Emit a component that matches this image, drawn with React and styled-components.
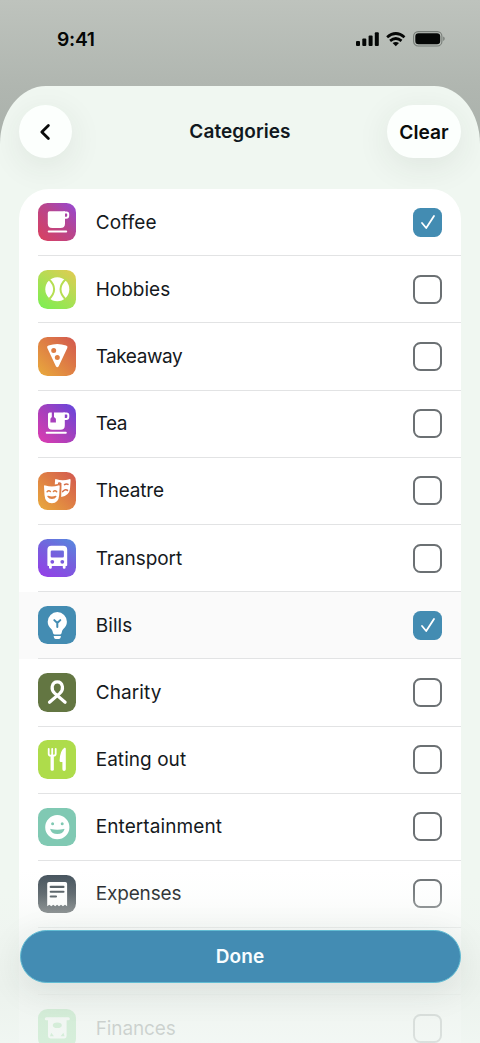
import React from "react";
import styled, { createGlobalStyle } from "styled-components";

const Global = createGlobalStyle`
  * { box-sizing: border-box; }
  body { margin: 0; font-family: Inter, "Liberation Sans", sans-serif; color: #15191d; overflow: hidden; }
  button { font: inherit; border: 0; padding: 0; cursor: pointer; }
`;

const Screen = styled.div`
  position: relative;
  display: flex;
  flex-direction: column;
  width: 480px;
  height: 1043px;
  overflow: hidden;
  background: linear-gradient(#bec3bd 0, #b0b6b0 86px, #a9b0aa 150px);
`;

const StatusBar = styled.div`
  display: flex;
  flex: none;
  align-items: center;
  justify-content: space-between;
  height: 86px;
  padding: 0 35px 8px 57px;
  color: #050706;
`;

const Time = styled.span`
  font-size: 19.3px;
  font-weight: 600;
  letter-spacing: -0.3px;
`;

const StatusIcons = styled.div`
  display: flex;
  align-items: center;
  gap: 7px;
  svg { display: block; }
`;

const Sheet = styled.main`
  display: flex;
  flex: 1;
  flex-direction: column;
  min-height: 0;
  overflow: hidden;
  background: #f0f7f1;
  border-radius: 46px 46px 0 0 / 58px 58px 0 0;
`;

const Header = styled.header`
  display: grid;
  flex: none;
  grid-template-columns: 74px 1fr 74px;
  align-items: center;
  height: 103px;
  padding: 0 19px 12px;
`;

const Title = styled.h1`
  margin: 0;
  color: #111820;
  font-size: 19px;
  font-weight: 600;
  letter-spacing: 0.08px;
  text-align: center;
`;

const PillButton = styled.button`
  display: flex;
  align-items: center;
  justify-content: center;
  width: ${(p) => p.$width}px;
  height: 52.5px;
  border-radius: 27px;
  background: #fcfffd;
  color: #0a0c0b;
  font-size: 19.2px;
  font-weight: 600;
  box-shadow: 0 8px 34px rgba(40, 50, 45, 0.09);
`;

const BackIcon = styled.svg`
  margin-right: 2px;
`;

const List = styled.ul`
  flex: none;
  margin: 0 19px 0 19.3px;
  padding: 0;
  list-style: none;
  overflow: hidden;
  background: #fff;
  border-radius: 30px 30px 0 0;
`;

const Row = styled.li`
  display: flex;
  height: 67.2px;
  padding-left: 18.7px;
  background: ${(p) => (p.$active ? "#fafafa" : "transparent")};
`;

const RowBody = styled.div`
  display: flex;
  flex: 1;
  align-items: center;
  padding-right: 19px;
  border-bottom: 1px solid #e2e3e4;
`;

const Tile = styled.span`
  display: flex;
  flex: none;
  width: 38.5px;
  height: 38.5px;
  border-radius: 9.5px;
  background: ${(p) => p.$fill};
  color: #fff;
  svg { display: block; width: 100%; height: 100%; }
`;

const Label = styled.span`
  flex: 1;
  margin-left: 19.2px;
  color: #15191d;
  font-size: 19px;
  font-weight: 400;
  letter-spacing: ${(p) => p.$tracking}px;
`;

const Checkbox = styled.span`
  display: flex;
  align-items: center;
  justify-content: center;
  width: 29px;
  height: 29px;
  border: ${(p) => (p.$checked ? "0" : "2.4px solid #6b7073")};
  border-radius: 7.5px;
  background: ${(p) => (p.$checked ? "#438cb2" : "transparent")};
`;

const Footer = styled.footer`
  position: absolute;
  right: 0;
  bottom: 0;
  left: 0;
  height: 183px;
  padding: 70px 19.5px 0;
  background: linear-gradient(
    rgba(240, 246, 241, 0) 10px,
    rgba(240, 246, 241, 0.12) 34px,
    rgba(239, 244, 240, 0.5) 67px,
    rgba(235, 241, 236, 0.83) 125px,
    rgba(240, 246, 242, 0.84) 183px
  );
`;

const DoneButton = styled.button`
  display: flex;
  align-items: center;
  justify-content: center;
  width: 100%;
  height: 52.7px;
  border: 1px solid #62bcd3;
  border-radius: 27px;
  background: #438cb3;
  color: #f8fdff;
  font-size: 19px;
  font-weight: 600;
  letter-spacing: 0.1px;
  box-shadow: 0 8px 34px rgba(40, 50, 45, 0.1);
`;

const Glyph = ({ children }) => (
  <svg viewBox="0 0 38.5 38.5" fill="none" aria-hidden="true">{children}</svg>
);

const stroke = (width) => ({
  stroke: "currentColor",
  strokeWidth: width,
  strokeLinecap: "round",
  strokeLinejoin: "round",
});

const Coffee = () => (
  <Glyph>
    <path d="M11.5 8.3H27V20.5Q27 25 22.5 25H14.3Q9.8 25 9.8 20.5V10Q9.8 8.3 11.5 8.3Z" fill="currentColor" />
    <path d="M26 9.4H28.6Q30.2 9.4 30.2 11V12.8Q30.2 14.8 28.2 14.8H26" {...stroke(2)} />
    <path d="M10.7 28.4H28.2" {...stroke(2)} />
  </Glyph>
);

const Tennis = ({ tint = "#b6de52" }) => (
  <Glyph>
    <circle cx="19.3" cy="19.3" r="12" fill="currentColor" />
    <path d="M10.7 9Q21.5 19.3 10.7 29.6M27.9 9Q17.1 19.3 27.9 29.6" stroke={tint} strokeWidth="2" />
  </Glyph>
);

const Pizza = () => (
  <Glyph>
    <path
      fillRule="evenodd"
      fill="currentColor"
      d="M9.3 11Q8.4 9.2 10.5 8.4Q19.3 5.4 28.1 8.4Q30.2 9.2 29.3 11L20.7 29.3Q19.3 31.3 17.9 29.3ZM18.2 13.5A2.5 2.5 0 1 0 13.2 13.5A2.5 2.5 0 1 0 18.2 13.5ZM21.8 20.6A2.5 2.5 0 1 0 16.8 20.6A2.5 2.5 0 1 0 21.8 20.6Z"
    />
  </Glyph>
);

const Tea = () => (
  <Glyph>
    <path
      fill="currentColor"
      d="M11.7 8.6H13.8V13L12.4 14.7V18.6H17.9V14.7L16 13V8.6H26.8V21.4Q26.8 25.8 22.4 25.8H14.4Q10 25.8 10 21.4V10.3Q10 8.6 11.7 8.6Z"
    />
    <path d="M26 9.6H28.6Q30.3 9.6 30.3 11.2V12.8Q30.3 15 28.2 15H26" {...stroke(2)} />
    <path d="M8.7 28.7H27.8" {...stroke(2)} />
  </Glyph>
);

const Masks = () => (
  <Glyph>
    <path
      fill="currentColor"
      d="M17.1 7.8Q17.2 6.8 18.4 7.2Q24.8 9.3 31.2 7.2Q32.7 6.8 32.6 8.4L32 17Q31.3 23.6 23.2 24.9L23.5 13.2Q23.5 11.4 21.7 11.8L16.8 12.4Z"
    />
    <path d="M26.5 12.6Q28.4 11.3 30 12.4M20.6 11.2Q22 10.8 22.8 11.8M24.7 19.6Q27.6 16.5 29.5 18.4" stroke="#d66f49" strokeWidth="1.5" strokeLinecap="round" />
    <path
      fill="currentColor"
      d="M6 14.3Q5.9 12.9 7.4 13.4Q13.9 15.6 20.3 13.4Q21.8 12.9 21.7 14.3L21.2 23Q20.6 31.2 13.9 31.2Q7.1 31.2 6.5 23Z"
    />
    <path d="M9.1 19.8Q10.7 18 12.4 19.5M15.4 19.5Q17.1 18 18.7 19.8M10 24.4Q13.9 25.8 17.8 24.4Q16.6 26.4 13.9 26.4Q11.2 26.4 10 24.4Z" stroke="#de8044" strokeWidth="1.4" strokeLinecap="round" strokeLinejoin="round" />
  </Glyph>
);

const Bus = () => (
  <Glyph>
    <path
      fillRule="evenodd"
      fill="currentColor"
      d="M13.4 6.8H25.2Q29.2 6.8 29.2 10.8V26.2Q29.2 27 28.4 27H27.6V28.5Q27.6 29.8 26.2 29.8Q24.8 29.8 24.8 28.5V27H13.8V28.5Q13.8 29.8 12.4 29.8Q11 29.8 11 28.5V27H10.2Q9.4 27 9.4 26.2V10.8Q9.4 6.8 13.4 6.8ZM14 11.5Q12.7 11.5 12.7 12.8V17.3Q12.7 18.6 14 18.6H24.6Q25.9 18.6 25.9 17.3V12.8Q25.9 11.5 24.6 11.5ZM16.2 22.8A1.9 1.9 0 1 0 12.4 22.8A1.9 1.9 0 1 0 16.2 22.8ZM26.2 22.8A1.9 1.9 0 1 0 22.4 22.8A1.9 1.9 0 1 0 26.2 22.8Z"
    />
  </Glyph>
);

const Bulb = () => (
  <Glyph>
    <path
      fill="currentColor"
      d="M19.3 6.1A9.6 9.6 0 0 1 28.9 15.7Q28.9 20 25.1 23.2Q24 24.2 23.6 27Q23.4 28.4 22.1 28.4H16.5Q15.2 28.4 15 27Q14.6 24.2 13.5 23.2Q9.7 20 9.7 15.7A9.6 9.6 0 0 1 19.3 6.1ZM15.7 30H22.9Q22.7 33 20.8 33H17.8Q15.9 33 15.7 30Z"
    />
    <path d="M16.3 14.1L19.3 17L22.3 14.1M19.3 17V21" stroke="#438cb2" strokeWidth="2" strokeLinecap="round" strokeLinejoin="round" />
  </Glyph>
);

const Ribbon = () => (
  <Glyph>
    <path
      d="M11.5 29.3L21.8 20.4Q25 17.5 24.4 13.5Q23.4 8.8 19.3 8.8Q15.2 8.8 14.2 13.5Q13.6 17.5 16.8 20.4L27.1 29.3"
      {...stroke(3.2)}
    />
  </Glyph>
);

const Cutlery = () => (
  <Glyph>
    <path
      d="M10.7 8.8V13.7Q10.7 15.6 12.5 15.6H15.8Q17.7 15.6 17.7 13.7V8.8M14.2 8.8V15"
      {...stroke(1.8)}
    />
    <path d="M14.2 16V29.2" {...stroke(3.3)} />
    <path fill="currentColor" d="M26.3 7.8Q27.8 7.3 27.8 8.8V29.2Q27.8 31 26.1 31Q24.4 31 24.4 29.2V22H22.8Q21.5 22 21.6 20.5Q22 10.7 26.3 7.8Z" />
  </Glyph>
);

const Smile = () => (
  <Glyph>
    <path
      fillRule="evenodd"
      fill="currentColor"
      d="M31.4 19.2A12.1 12.1 0 1 0 7.2 19.2A12.1 12.1 0 1 0 31.4 19.2ZM16.1 15.8A1.5 1.5 0 1 0 13.1 15.8A1.5 1.5 0 1 0 16.1 15.8ZM25.7 15.8A1.5 1.5 0 1 0 22.7 15.8A1.5 1.5 0 1 0 25.7 15.8ZM13 20.9Q19.3 22.5 25.7 20.9Q26.6 20.7 26.4 21.6Q24.9 26.1 19.3 26.1Q13.8 26.1 12.3 21.6Q12.1 20.7 13 20.9Z"
    />
  </Glyph>
);

const Receipt = () => (
  <Glyph>
    <path
      fill="currentColor"
      d="M11 6.9H27.3Q29.1 6.9 29.1 8.7V31.2L27 29.8L24.9 31.2L23 29.8L21 31.2L19.1 29.8L17.2 31.2L15.2 29.8L13.3 31.2L11.3 29.8L9.2 31.2V8.7Q9.2 6.9 11 6.9Z"
    />
    <path d="M12.7 11.9H25.5M12.7 16.8H25.5M12.7 21.5H18" stroke="#4b555b" strokeWidth="2.1" strokeLinecap="round" />
  </Glyph>
);

const Banknote = () => (
  <Glyph>
    <path d="M8.3 9.8H30.3" {...stroke(3)} />
    <path
      fillRule="evenodd"
      fill="currentColor"
      d="M10 10H28.6V27Q28.6 29.4 26.3 29.4H12.3Q10 29.4 10 27ZM23.8 16.2A4.5 2.8 0 1 0 14.8 16.2A4.5 2.8 0 1 0 23.8 16.2ZM12 27.3H16L13.2 23.8ZM26.6 27.3H22.6L25.4 23.8Z"
    />
  </Glyph>
);

const categories = [
  { name: "Coffee", Icon: Coffee, tracking: 0.15, fill: "linear-gradient(45deg, #db405d, #b8458d 55%, #9548d5)", checked: true },
  { name: "Hobbies", Icon: Tennis, tracking: 0, fill: "linear-gradient(35deg, #78f052, #addf54 50%, #e3ca52)" },
  { name: "Takeaway", Icon: Pizza, tracking: -0.45, fill: "linear-gradient(45deg, #e9ab3c, #df8044 50%, #d25750)" },
  { name: "Tea", Icon: Tea, tracking: -0.5, fill: "linear-gradient(45deg, #de3cb0, #a640bc 50%, #6346dd)" },
  { name: "Theatre", Icon: Masks, tracking: -0.2, fill: "linear-gradient(45deg, #e9ab3c, #df8044 50%, #d25750)" },
  { name: "Transport", Icon: Bus, tracking: -0.05, fill: "linear-gradient(30deg, #973de8, #7561dd 55%, #558ade)" },
  { name: "Bills", Icon: Bulb, tracking: 0.1, fill: "#438cb2", checked: true, active: true },
  { name: "Charity", Icon: Ribbon, tracking: 0.1, fill: "#637642" },
  { name: "Eating out", Icon: Cutlery, tracking: 0.05, fill: "#aedc4b" },
  { name: "Entertainment", Icon: Smile, tracking: 0.1, fill: "#80c9b3" },
  { name: "Expenses", Icon: Receipt, tracking: -0.15, fill: "linear-gradient(#43515b, #5b6265)" },
  { spacer: true },
  { name: "Finances", Icon: Banknote, tracking: -0.1, fill: "#4fc660" },
];

const SignalIcon = () => (
  <svg width="23" height="15" viewBox="0 0 23 15" fill="currentColor">
    <rect x="0" y="9" width="4" height="5" rx="1" />
    <rect x="6.3" y="6.4" width="4" height="7.6" rx="1" />
    <rect x="12.6" y="3.5" width="4" height="10.5" rx="1" />
    <rect x="18.8" y="0.2" width="4" height="13.8" rx="1" />
  </svg>
);

const WifiIcon = () => (
  <svg width="20" height="15" viewBox="0 0 20 15" fill="none" stroke="currentColor" strokeWidth="2.7">
    <path d="M1.1 5.2Q9.8-2.2 18.5 5.2M4.1 8.9Q9.8 4.1 15.5 8.9" />
    <path d="M6.6 11.1Q9.8 8.7 13 11.1L9.8 14.2Z" fill="currentColor" stroke="none" />
  </svg>
);

const BatteryIcon = () => (
  <svg width="32" height="16" viewBox="0 0 32 16" fill="none">
    <rect x="0.6" y="0.6" width="28.3" height="14.4" rx="4.6" stroke="#777d78" strokeWidth="1.1" />
    <rect x="2.3" y="2.3" width="24.9" height="11" rx="3.2" fill="currentColor" />
    <path d="M30.2 5.6Q31.7 6.2 31.7 7.8Q31.7 9.4 30.2 10Z" fill="#777d78" />
  </svg>
);

const CategoryRow = ({ name, Icon, fill, tracking, checked, active }) => (
  <Row $active={active}>
    <RowBody>
      <Tile $fill={fill}><Icon /></Tile>
      <Label $tracking={tracking}>{name}</Label>
      <Checkbox $checked={checked} role="checkbox" aria-checked={!!checked} aria-label={name}>
        {checked && (
          <svg width="16" height="16" viewBox="0 0 16 16" fill="none">
            <path d="M2 9L6.2 14L14 2" stroke="#fff" strokeWidth="1.8" strokeLinecap="round" strokeLinejoin="round" />
          </svg>
        )}
      </Checkbox>
    </RowBody>
  </Row>
);

export default function App() {
  return (
    <Screen>
      <Global />
      <StatusBar>
        <Time>9:41</Time>
        <StatusIcons>
          <SignalIcon />
          <WifiIcon />
          <BatteryIcon />
        </StatusIcons>
      </StatusBar>
      <Sheet>
        <Header>
          <PillButton $width={53} aria-label="Back">
            <BackIcon width="12" height="18" viewBox="0 0 12 18" fill="none">
              <path d="M9.4 2.4L2.8 9L9.4 15.6" {...stroke(2.8)} />
            </BackIcon>
          </PillButton>
          <Title>Categories</Title>
          <PillButton $width={74}>Clear</PillButton>
        </Header>
        <List>
          {categories.map((category, index) =>
            category.spacer ? (
              <Row key={index} aria-hidden="true"><RowBody /></Row>
            ) : (
              <CategoryRow key={index} {...category} />
            )
          )}
        </List>
      </Sheet>
      <Footer>
        <DoneButton>Done</DoneButton>
      </Footer>
    </Screen>
  );
}
